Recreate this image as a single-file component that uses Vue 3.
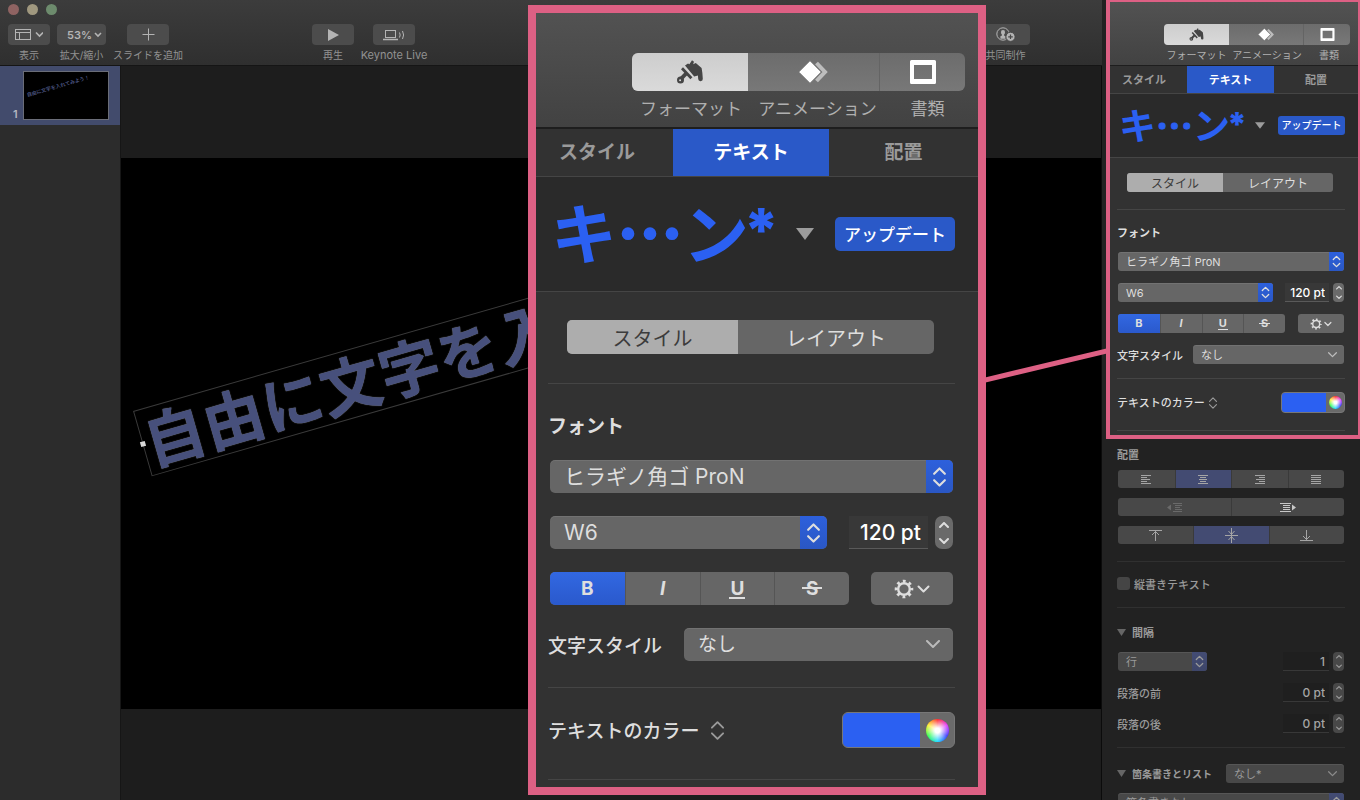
<script setup>
import { ref } from 'vue'

const panels = ['side', 'zoom']
const slideText = '自由に文字を入れてみよう！'
const vertical = ref(false)
</script>

<template>
  <div class="app">
    <header class="toolbar">
      <div class="lights"><i class="close"></i><i class="min"></i><i class="max"></i></div>
      <div class="tools">
        <div class="group">
          <div class="tool">
            <button id="t-view">
              <svg width="28" height="13" viewBox="0 0 28 13" fill="none" stroke="currentColor"><rect x=".5" y="1.500" width="15" height="10" /><path d="M.5 4.500h15M4.500 4.500v7" /><path d="M21 4.500l3.500 3.500 3.500-3.500" stroke-width="1.600" /></svg>
            </button>
            <label for="t-view">表示</label>
          </div>
          <div class="tool wide">
            <button id="t-zoom" class="percent">53%<svg width="8" height="6" viewBox="0 0 8 6" fill="none" stroke="currentColor" stroke-width="1.600"><path d="M1 1l3 3 3-3" /></svg></button>
            <label for="t-zoom">拡大/縮小</label>
          </div>
        </div>
        <div class="group add">
          <div class="tool">
            <button id="t-add"><svg width="13" height="13" viewBox="0 0 13 13" stroke="currentColor"><path d="M6.500 .5v12M.5 6.500h12" /></svg></button>
            <label for="t-add">スライドを追加</label>
          </div>
        </div>
        <div class="group play">
          <div class="tool">
            <button id="t-play"><svg width="12" height="12" viewBox="0 0 12 12" fill="currentColor"><path d="M1 0l11 6-11 6z" /></svg></button>
            <label for="t-play">再生</label>
          </div>
          <div class="tool">
            <button id="t-live">
              <svg width="23" height="12" viewBox="0 0 23 12" fill="none" stroke="currentColor"><rect x="2.500" y="1.500" width="10" height="7" /><path d="M0 10.500h15" stroke-width="1.500" /><path d="M16.500 3.500q1.400 2.500 0 5M19.500 2q2.200 4 0 8" /></svg>
            </button>
            <label for="t-live">Keynote Live</label>
          </div>
        </div>
        <div class="group share">
          <div class="tool wide">
            <button id="t-share">
              <svg width="20" height="15" viewBox="0 0 20 15" fill="none" stroke="currentColor"><circle cx="7" cy="7" r="6.200" /><path d="M7 3a2 2 0 0 1 2 2.200q0 1.800-1 2.600v.6l1.600.8v2.600H4.400V9.200L6 8.400v-.6Q5 7 5 5.200A2 2 0 0 1 7 3z" fill="currentColor" stroke="none" /><circle cx="14.500" cy="9.800" r="4.600" fill="currentColor" stroke="#484848" /><path d="M14.500 7.500v4.600M12.200 9.800h4.600" stroke="#484848" stroke-width="1.200" /></svg>
            </button>
            <label for="t-share">共同制作</label>
          </div>
        </div>
      </div>
    </header>

    <main class="workspace">
      <nav class="slides">
        <a href="#slide-1" class="slide-row">
          <span class="num">1</span>
          <span class="thumb"><span class="thumb-text">{{ slideText }}</span></span>
        </a>
      </nav>
      <section class="canvas">
        <div id="slide-1" class="stage">
          <div class="textbox">{{ slideText }}<i class="handle"></i></div>
        </div>
      </section>
    </main>

    <aside v-for="p in panels" :key="p" :class="['inspector', p]">
      <div class="frame">
        <div class="head">
          <div class="head-seg">
            <button :id="p + '-format'" class="on">
              <svg class="ico" viewBox="0 0 26 24" fill="currentColor">
                <path d="M8 5.600L11 3.400l1.400.9L15 .3l2 1.500-.9 2.500 2.700-1.300L24.600 8q1 5 1.200 10.800a2.300 2.300 0 0 1-4.600.3l-.3-3.500-3.700 1z" />
                <path d="M5 8.200l9.400 10" stroke="currentColor" stroke-width="2.800" />
                <path d="M9.600 13.200l-5.200 5.200" stroke="currentColor" stroke-width="3.800" />
                <path fill-rule="evenodd" d="M3.500 16.400a3.500 3.500 0 1 1 0 7 3.500 3.500 0 0 1 0-7zm-.4 2.900a1 1 0 1 0 0 2 1 1 0 0 0 0-2z" />
              </svg>
            </button>
            <button :id="p + '-anim'">
              <svg class="ico anim" viewBox="0 0 30 24"><path d="M17.500 3l8.500 9-8.500 9" fill="none" stroke="#bdbdbd" stroke-width="4" /><path d="M11 .8L22.200 12 11 23.200-.2 12z" fill="#fff" stroke="#767676" stroke-width=".8" /></svg>
            </button>
            <button :id="p + '-doc'">
              <svg class="ico" viewBox="0 0 26 24"><path fill="#fff" fill-rule="evenodd" d="M1.500 0h23Q26 0 26 1.500v21q0 1.500-1.500 1.500h-23Q0 24 0 22.500v-21Q0 0 1.500 0zM4 5v14h18V5z" /></svg>
            </button>
          </div>
          <div class="head-labels">
            <label :for="p + '-format'">フォーマット</label>
            <label :for="p + '-anim'">アニメーション</label>
            <label :for="p + '-doc'">書類</label>
          </div>
        </div>

        <div class="tabs">
          <button>スタイル</button>
          <button class="on">テキスト</button>
          <button>配置</button>
        </div>

        <div class="preview">
          <span class="sample">キ<i>…</i>ン<b>*</b></span>
          <svg class="tri" viewBox="0 0 18 12" fill="#9c9c9c"><path d="M0 0h18L9 12z" /></svg>
          <button>アップデート</button>
        </div>

        <div class="body">
          <div class="switch">
            <button class="on">スタイル</button>
            <button>レイアウト</button>
          </div>
          <hr>
          <label class="title" :for="p + '-font'">フォント</label>
          <div class="rows">
            <div class="select">
              <select :id="p + '-font'"><option>ヒラギノ角ゴ ProN</option></select>
              <span class="cap"><svg viewBox="0 0 14 20"><path d="M2 7l5-5 5 5M2 13l5 5 5-5" /></svg></span>
            </div>
            <div class="row">
              <div class="select weight">
                <select aria-label="W6"><option>W6</option></select>
                <span class="cap"><svg viewBox="0 0 14 20"><path d="M2 7l5-5 5 5M2 13l5 5 5-5" /></svg></span>
              </div>
              <input class="num-field" type="text" value="120 pt" aria-label="pt">
              <button class="stepper" aria-label="pt"><svg viewBox="0 0 10 22"><path d="M1 5l4-4 4 4M1 17l4 4 4-4" /></svg></button>
            </div>
            <div class="row between">
              <div class="marks">
                <button class="on"><span>B</span></button>
                <button><span class="i">I</span></button>
                <button><span class="u">U</span></button>
                <button><span class="s">S</span></button>
              </div>
              <button class="gear" aria-label="gear">
                <svg viewBox="0 0 36 20" fill="none" stroke="currentColor"><circle cx="10" cy="10" r="5.800" stroke-width="2.400" /><circle cx="10" cy="10" r="7.800" stroke-width="3" stroke-dasharray="2.800 3.326" stroke-dashoffset="1.400" /><path d="M24.500 7.500l5 5 5-5" stroke-width="2" stroke-linecap="round" stroke-linejoin="round" /></svg>
              </button>
            </div>
            <div class="row between">
              <label :for="p + '-char'">文字スタイル</label>
              <div class="select style">
                <select :id="p + '-char'"><option>なし</option></select>
                <svg class="down" viewBox="0 0 14 9"><path d="M1 1l6 6 6-6" /></svg>
              </div>
            </div>
          </div>
          <hr>
          <div class="color-row">
            <label :for="p + '-color'">テキストのカラー</label>
            <svg class="updown" viewBox="0 0 14 20"><path d="M1 7l6-6 6 6M1 13l6 6 6-6" /></svg>
            <button :id="p + '-color'" class="swatch"><i class="fill"></i><i class="wheel"></i></button>
          </div>
          <hr class="last">
        </div>
      </div>

      <div v-if="p === 'side'" class="lower">
        <h3 class="title">配置</h3>
        <div class="groups">
          <div class="grp four">
            <button aria-label="left"><svg viewBox="0 0 10 9"><path d="M0 .5h10M0 2.500h6M0 4.500h9M0 6.500h6M0 8.500h10" /></svg></button>
            <button aria-label="center" class="on"><svg viewBox="0 0 10 9"><path d="M0 .5h10M2 2.500h6M1 4.500h8M2 6.500h6M0 8.500h10" /></svg></button>
            <button aria-label="right"><svg viewBox="0 0 10 9"><path d="M0 .5h10M4 2.500h6M1 4.500h9M4 6.500h6M0 8.500h10" /></svg></button>
            <button aria-label="justify"><svg viewBox="0 0 10 9"><path d="M0 .5h10M0 2.500h10M0 4.500h10M0 6.500h10M0 8.500h10" /></svg></button>
          </div>
          <div class="grp two">
            <button aria-label="outdent" class="off"><svg class="w16" viewBox="0 0 16 9"><path d="M6 .5h9M8 2.500h7M8 4.500h5M8 6.500h7M6 8.500h9" /><path d="M4 1.500v6L0 4.500z" class="solid" /></svg></button>
            <button aria-label="indent"><svg class="w16 hi" viewBox="0 0 16 9"><path d="M0 .5h11M3 2.500h7M3 4.500h7M3 6.500h7M0 8.500h11" /><path d="M12 1.500v6l4-3z" class="solid" /></svg></button>
          </div>
          <div class="grp three">
            <button aria-label="top"><svg class="v" viewBox="0 0 13 15"><path d="M0 2.500h13M6.500 3v10M3 7l3.500-3.500L10 7" /></svg></button>
            <button aria-label="middle" class="on"><svg class="v" viewBox="0 0 13 15"><path d="M0 7.500h13M6.500 0v15M3.500 3l3 3.500 3-3.500M3.500 12l3-3.500 3 3.500" /></svg></button>
            <button aria-label="bottom"><svg class="v" viewBox="0 0 13 15"><path d="M0 12.500h13M6.500 2v10M3 8l3.500 3.500L10 8" /></svg></button>
          </div>
        </div>
        <hr>
        <label class="check"><input v-model="vertical" type="checkbox">縦書きテキスト</label>
        <hr>
        <h3 class="disclose"><svg class="tri2" viewBox="0 0 9 7"><path d="M0 0h9L4.500 7z" /></svg>間隔</h3>
        <div class="rows">
          <div class="row">
            <div class="select line">
              <select aria-label="行"><option>行</option></select>
              <span class="cap"><svg viewBox="0 0 14 20"><path d="M2 7l5-5 5 5M2 13l5 5 5-5" /></svg></span>
            </div>
            <input class="num-field" type="text" value="1" aria-label="行">
            <button class="stepper" aria-label="行"><svg viewBox="0 0 10 22"><path d="M1 5l4-4 4 4M1 17l4 4 4-4" /></svg></button>
          </div>
          <div class="row">
            <label for="before">段落の前</label>
            <input id="before" class="num-field" type="text" value="0 pt">
            <button class="stepper" aria-label="段落の前"><svg viewBox="0 0 10 22"><path d="M1 5l4-4 4 4M1 17l4 4 4-4" /></svg></button>
          </div>
          <div class="row">
            <label for="after">段落の後</label>
            <input id="after" class="num-field" type="text" value="0 pt">
            <button class="stepper" aria-label="段落の後"><svg viewBox="0 0 10 22"><path d="M1 5l4-4 4 4M1 17l4 4 4-4" /></svg></button>
          </div>
        </div>
        <hr>
        <div class="row list-row between">
          <label class="list-label" for="list"><svg class="tri2" viewBox="0 0 9 7"><path d="M0 0h9L4.500 7z" /></svg>箇条書きとリスト</label>
          <div class="select list">
            <select id="list"><option>なし*</option></select>
            <svg class="down" viewBox="0 0 14 9"><path d="M1 1l6 6 6-6" /></svg>
          </div>
        </div>
        <div class="select bullets">
          <select aria-label="箇条書きなし"><option>箇条書きなし</option></select>
          <span class="cap"><svg viewBox="0 0 14 20"><path d="M2 7l5-5 5 5M2 13l5 5 5-5" /></svg></span>
        </div>
      </div>
    </aside>

    <svg class="link" width="122" height="36" viewBox="0 0 122 36"><path d="M0 32L122 3" stroke="#dd6084" stroke-width="5" /></svg>
  </div>
</template>

<style>
body { background: #1d1d1d; }
</style>

<style scoped>
* { box-sizing: border-box; }
.app {
  position: relative;
  display: grid;
  grid-template-columns: minmax(0, 1fr) 258px;
  grid-template-rows: 66px minmax(0, 1fr);
  height: 100vh;
  overflow: hidden;
  font-family: Inter, "Noto Sans CJK JP", sans-serif;
  font-size: 11px;
  color: #9a9a9a;
}
button, input, select {
  font: inherit;
  color: inherit;
  border: 0;
  padding: 0;
  margin: 0;
  background: none;
  border-radius: 0;
  min-width: 0;
}
button { display: flex; align-items: center; justify-content: center; white-space: nowrap; }
label, h3 { white-space: nowrap; }
h3 { margin: 0; font-size: inherit; }
hr { border: 0; height: 1px; margin: 0; }

/* toolbar */
.toolbar {
  background: linear-gradient(#3c3c3c, #2f2f2f);
  border-bottom: 1px solid #151515;
}
.lights { display: flex; gap: 8px; height: 24px; padding: 4px 8px; }
.lights i { width: 11px; height: 11px; border-radius: 50%; }
.close { background: #8f6362; }
.min { background: #a0987f; }
.max { background: #6d8b6d; }
.tools { display: flex; padding-left: 8px; }
.group { display: flex; gap: 7px; }
.add { margin-left: 21px; }
.play { margin-left: 143px; gap: 19px; }
.share { margin-left: auto; margin-right: 72px; }
.tool { display: flex; flex-direction: column; align-items: center; width: 42px; gap: 3px; }
.tool.wide { width: 49px; }
.tool button {
  width: 100%;
  height: 21px;
  gap: 2px;
  border-radius: 4px;
  background: #4c4c4c;
  color: #b4b4b4;
  font-weight: 600;
}
.tool .percent { padding-left: 6px; }
.tool label { font-size: 10px; line-height: 14px; color: #929292; }
.play label { font-size: 11px; }
.play .tool:first-child label { font-size: 10px; }

/* slides and canvas */
.workspace { display: grid; grid-template-columns: 121px minmax(0, 1fr); min-height: 0; }
.slides { background: #2c2c2c; border-right: 1px solid #161616; }
.slide-row {
  display: flex;
  align-items: flex-end;
  gap: 5px;
  height: 59px;
  padding: 0 11px 5px 13px;
  background: #424b6c;
  color: #b5b8c2;
  text-decoration: none;
}
.num { width: 5px; font-weight: 600; line-height: 12px; }
.thumb {
  position: relative;
  flex: 1;
  height: 49px;
  overflow: hidden;
  background: #000;
  border: 1px solid #6a6d78;
}
.thumb-text {
  position: absolute;
  left: 2px;
  top: 20px;
  font-size: 5px;
  line-height: 6px;
  font-weight: 700;
  white-space: nowrap;
  color: #47507c;
  transform: rotate(-16deg);
  transform-origin: 0 0;
}
.canvas {
  display: grid;
  grid-template-rows: 92px minmax(0, 1fr) 91px;
  background: #1d1d1d;
  border-right: 1px solid #0b0b0b;
}
.stage { grid-row: 2; position: relative; overflow: hidden; background: #000; }
.textbox {
  position: absolute;
  left: 12px;
  top: 253px;
  height: 68px;
  padding: 2px 4px 0 2px;
  border: 1px solid #3a3a3a;
  font-size: 61px;
  line-height: 66px;
  font-weight: 700;
  white-space: nowrap;
  color: #47507c;
  text-shadow: 0 0 1px #8c8c8c;
  transform: rotate(-16deg);
  transform-origin: 0 0;
}
.handle { position: absolute; left: -3px; top: 31px; width: 5px; height: 5px; background: #d8d8d8; }

/* inspector: shared metrics */
.inspector {
  --label: 11px;
  --small: 10px;
  --field: 11px;
  --number: 12px;
  --seg: 12px;
  --row: 19px;
  --gap: 12px;
  --inset: 1px;
  --radius: 3px;
  --cap: 15px;
  --ctl: #666;
  --blue: #2d60dc;
  --blue-dark: #2a57c4;
  --rule: #454545;
  --text: #dedede;
}
.side {
  grid-column: 2;
  grid-row: 1 / 3;
  overflow: hidden;
  background: #222;
}
.side .frame {
  margin-left: 4px;
  border: solid #dd6084;
  border-width: 2px 2px 4px 4px;
}
.zoom {
  --label: 19px;
  --small: 17px;
  --field: 21px;
  --number: 21px;
  --seg: 20px;
  --row: 33px;
  --gap: 23px;
  --inset: 2px;
  --radius: 5px;
  --cap: 27px;
  position: absolute;
  top: 5px;
  right: 374px;
  width: 458px;
  border: 8px solid #dd6084;
}
.frame { background: #323232; color: var(--text); font-size: var(--label); }

.head {
  display: flex;
  flex-direction: column;
  align-items: flex-end;
  height: 64px;
  padding: 22px 5px 0 0;
  border-bottom: 1px solid #1e1e1e;
  background: linear-gradient(#525252, #424242);
}
.zoom .head { height: 116px; padding: 40px 8px 0 0; border-bottom-width: 2px; }
.head-seg {
  display: grid;
  grid-template-columns: 65px 74px 47px;
  height: 21px;
  margin-right: 3px;
  border-radius: 4px;
  overflow: hidden;
  background: linear-gradient(#6c6c6c, #787878);
}
.zoom .head-seg { grid-template-columns: 116px 131px 86px; height: 38px; margin-right: 5px; border-radius: 6px; }
.head-seg .on { background: linear-gradient(#cdcdcd, #dadada); color: #454545; }
.head-seg button:last-child { border-left: 1px solid #646464; }
.ico { width: 15px; height: 13px; }
.anim { width: 17px; }
.zoom .ico { width: 26px; height: 24px; }
.zoom .anim { width: 30px; }
.head-labels {
  display: grid;
  grid-template-columns: 65px 76px 48px;
  padding-top: 3px;
  text-align: center;
  font-size: var(--small);
  line-height: 14px;
  color: #b0b0b0;
}
.zoom .head-labels { grid-template-columns: 118px 135px 85px; padding-top: 6px; line-height: 24px; }

.tabs {
  display: grid;
  grid-template-columns: 77fr 87fr 84fr;
  height: 28px;
  border-bottom: 1px solid #454545;
}
.zoom .tabs { grid-template-columns: 137fr 156fr 149fr; height: 48px; }
.tabs button { padding: 0 9px 2px 0; font-weight: 700; color: #9a9a9a; }
.zoom .tabs button { padding: 0 15px 4px 0; }
.tabs .on { padding-right: 0; background: #2a59c8; color: #fff; }
.zoom .tabs .on { padding-right: 0; }
.tabs button:last-child, .zoom .tabs button:last-child { padding-right: 0; }

.preview {
  display: flex;
  align-items: center;
  height: 64px;
  padding: 0 13px 0 9px;
  background: #2a2a2a;
  border-bottom: 1px solid #454545;
}
.zoom .preview { height: 115px; padding: 0 23px 0 15px; }
.sample {
  display: flex;
  margin-bottom: 4px;
  font-family: "Noto Sans CJK JP", sans-serif;
  font-size: 37px;
  line-height: 50px;
  font-weight: 700;
  color: #2b60f2;
}
.sample i { font-style: normal; -webkit-text-stroke: 1px #2b60f2; }
.sample b { margin-left: -3px; font-family: Inter, sans-serif; font-size: 33px; }
.zoom .sample { margin-bottom: 8px; font-size: 66px; line-height: 90px; }
.zoom .sample i { -webkit-text-stroke-width: 2px; }
.zoom .sample b { margin-left: -6px; font-size: 60px; }
.tri { width: 10px; height: 7px; margin-left: auto; }
.zoom .tri { width: 18px; height: 12px; }
.preview button {
  width: 67px;
  height: 19px;
  margin-left: 13px;
  padding-bottom: 2px;
  border-radius: var(--radius);
  background: #2a59c8;
  color: #fff;
  font-size: var(--small);
  font-weight: 500;
}
.zoom .preview button { width: 120px; height: 34px; margin-left: 21px; }

.body { padding: 15px 13px 4px 7px; }
.zoom .body { padding: 28px 23px 7px 12px; }
hr { background: var(--rule); }
.switch {
  display: grid;
  grid-template-columns: 96fr 110fr;
  height: 19px;
  margin: 0 12px 17px 10px;
  border-radius: var(--radius);
  overflow: hidden;
  background: #666;
  font-size: var(--seg);
}
.zoom .switch { grid-template-columns: 171fr 196fr; height: 34px; margin: 0 21px 29px 19px; }
.switch .on { background: #adadad; color: #3c3c3c; }
.title { display: flex; align-items: center; height: 42px; padding-top: 2px; font-weight: 700; }
.zoom .title { height: 76px; padding-top: 4px; }
.rows { display: flex; flex-direction: column; gap: var(--gap); padding: 0 var(--inset) 14px; }
.zoom .rows { padding-bottom: 26px; }
.row { display: flex; align-items: center; height: var(--row); }
.between { justify-content: space-between; }
.row label { margin-left: calc(0px - var(--inset)); font-weight: 500; }
.select {
  position: relative;
  height: var(--row);
  border-radius: var(--radius);
  overflow: hidden;
  background: var(--ctl);
  box-shadow: inset 0 1px 0 rgba(255, 255, 255, 0.08);
}
.select select {
  display: block;
  appearance: none;
  width: 100%;
  height: 100%;
  padding-left: 8px;
  font-size: var(--field);
}
.zoom .select select { padding-left: 14px; }
.frame .style select { font-size: var(--label); }
.cap {
  position: absolute;
  inset: 0 0 0 auto;
  display: flex;
  align-items: center;
  justify-content: center;
  width: var(--cap);
  background: linear-gradient(var(--blue), var(--blue-dark));
  pointer-events: none;
}
.cap svg { width: 9px; height: 13px; }
.zoom .cap svg { width: 15px; height: 22px; }
.cap path, .stepper path, .down path, .updown path { fill: none; stroke: currentColor; stroke-width: 2; stroke-linecap: round; stroke-linejoin: round; }
.weight { width: 155px; }
.zoom .weight { width: 277px; }
.num-field {
  width: 44px;
  height: 100%;
  margin-left: auto;
  padding-right: 4px;
  text-align: right;
  font-size: var(--number);
  font-weight: 500;
  background: #383838;
  border-bottom: 1px solid #5a5a5a;
}
.frame .num-field { color: #fff; }
.zoom .num-field { width: 79px; padding-right: 7px; }
.stepper { width: 11px; height: 100%; margin-left: 4px; border-radius: 4px; background: #6a6a6a; }
.stepper svg { width: 6px; height: 13px; }
.zoom .stepper { width: 18px; margin-left: 7px; border-radius: 7px; }
.zoom .stepper svg { width: 10px; height: 22px; }
.marks {
  display: grid;
  grid-template-columns: repeat(4, 1fr);
  width: 167px;
  height: 100%;
  border-radius: var(--radius);
  overflow: hidden;
  background: var(--ctl);
  font-size: var(--label);
  font-weight: 700;
}
.zoom .marks { width: 299px; }
.marks button + button { border-left: 1px solid #555; }
.marks .on { background: linear-gradient(#3268e2, #2a59cc); }
.marks span { position: relative; line-height: 1; }
.marks .i { font-style: italic; }
.u::after, .s::after { content: ""; position: absolute; left: -1px; right: -1px; height: 1px; background: currentColor; }
.u::after { bottom: -1px; }
.s::after { left: -2px; right: -2px; top: 5px; }
.zoom .u::after { height: 2px; bottom: -1px; }
.zoom .s::after { left: -4px; right: -4px; top: 8px; height: 2px; }
.gear { width: 46px; height: 100%; border-radius: var(--radius); background: var(--ctl); }
.gear svg { width: 22px; height: 12px; }
.zoom .gear { width: 82px; }
.zoom .gear svg { width: 36px; height: 20px; }
.style { width: 151px; }
.zoom .style { width: 269px; }
.down { position: absolute; right: 7px; top: 7px; width: 9px; height: 6px; pointer-events: none; color: #bbb; }
.zoom .down { right: 13px; top: 12px; width: 14px; height: 9px; }
.color-row { display: flex; align-items: center; height: 51px; padding-bottom: 4px; font-weight: 500; }
.color-row label { padding-bottom: 2px; }
.zoom .color-row { height: 91px; padding-bottom: 7px; }
.updown { width: 8px; height: 12px; margin-left: 4px; color: #9a9a9a; }
.zoom .updown { width: 13px; height: 19px; margin-left: 12px; }
.swatch {
  justify-content: flex-start;
  width: 64px;
  height: 21px;
  margin-left: auto;
  border: 1px solid #777;
  border-radius: 4px;
  overflow: hidden;
  background: #6a6a6a;
}
.fill { align-self: stretch; width: 44px; background: #2b60f2; }
.wheel {
  width: 13px;
  height: 13px;
  margin: 0 auto;
  border-radius: 50%;
  background: radial-gradient(#fff 15%, rgba(255, 255, 255, 0) 70%), conic-gradient(#ff2a2a, #e03cff, #3a3aff, #20d8ff, #30ff50, #ffee30, #ff2a2a);
}
.zoom .swatch { width: 113px; height: 36px; border-radius: 6px; }
.zoom .fill { width: 77px; }
.zoom .wheel { width: 23px; height: 23px; }

/* lower part of the side inspector */
.lower {
  --ctl: #484848;
  --blue: #434c74;
  --blue-dark: #3d4569;
  --rule: #303030;
  padding: 0 15px;
  color: #9a9a9a;
}
.lower .title { height: 31px; padding: 0 0 2px; }
.groups { display: flex; flex-direction: column; gap: 10px; padding: 0 1px 17px; }
.grp { display: grid; height: 19px; border-radius: 3px; overflow: hidden; background: var(--ctl); }
.four { grid-template-columns: repeat(4, 1fr); }
.two { grid-template-columns: repeat(2, 1fr); }
.three { grid-template-columns: repeat(3, 1fr); }
.groups .grp { height: 18px; }
.grp button + button { border-left: 1px solid #3a3a3a; }
.grp .on { background: #434b72; }
.grp svg { width: 10px; height: 9px; fill: none; stroke: #a5a5a5; }
.grp .w16 { width: 16px; }
.grp .hi { stroke: #c8c8c8; }
.grp .hi .solid { fill: #c8c8c8; stroke: none; }
.grp .v { width: 13px; height: 15px; }
.grp .off svg { stroke: #6a6a6a; }
.grp .off .solid { fill: #6a6a6a; stroke: none; }
.check { display: flex; align-items: center; gap: 4px; height: 45px; padding-bottom: 2px; font-weight: 500; }
.check input { appearance: none; width: 13px; height: 13px; border-radius: 3px; background: #454545; }
.disclose { display: flex; align-items: center; gap: 6px; height: 44px; padding-top: 4px; font-weight: 700; }
.tri2 { width: 9px; height: 7px; fill: #666; }
.line { width: 89px; }
.lower .num-field { width: 46px; background: #1f1f1f; border-bottom-color: #383838; color: #a5a5a5; }
.lower .stepper { background: #484848; }
.lower .down { color: #8a8a8a; }
.list-row { margin: 16px 1px 10px; }
.row .list-label { display: flex; align-items: center; gap: 6px; font-size: 10px; font-weight: 700; }
.list { width: 118px; }
.bullets { margin: 0 1px; }

.link { position: absolute; top: 348px; right: 253px; }
</style>
